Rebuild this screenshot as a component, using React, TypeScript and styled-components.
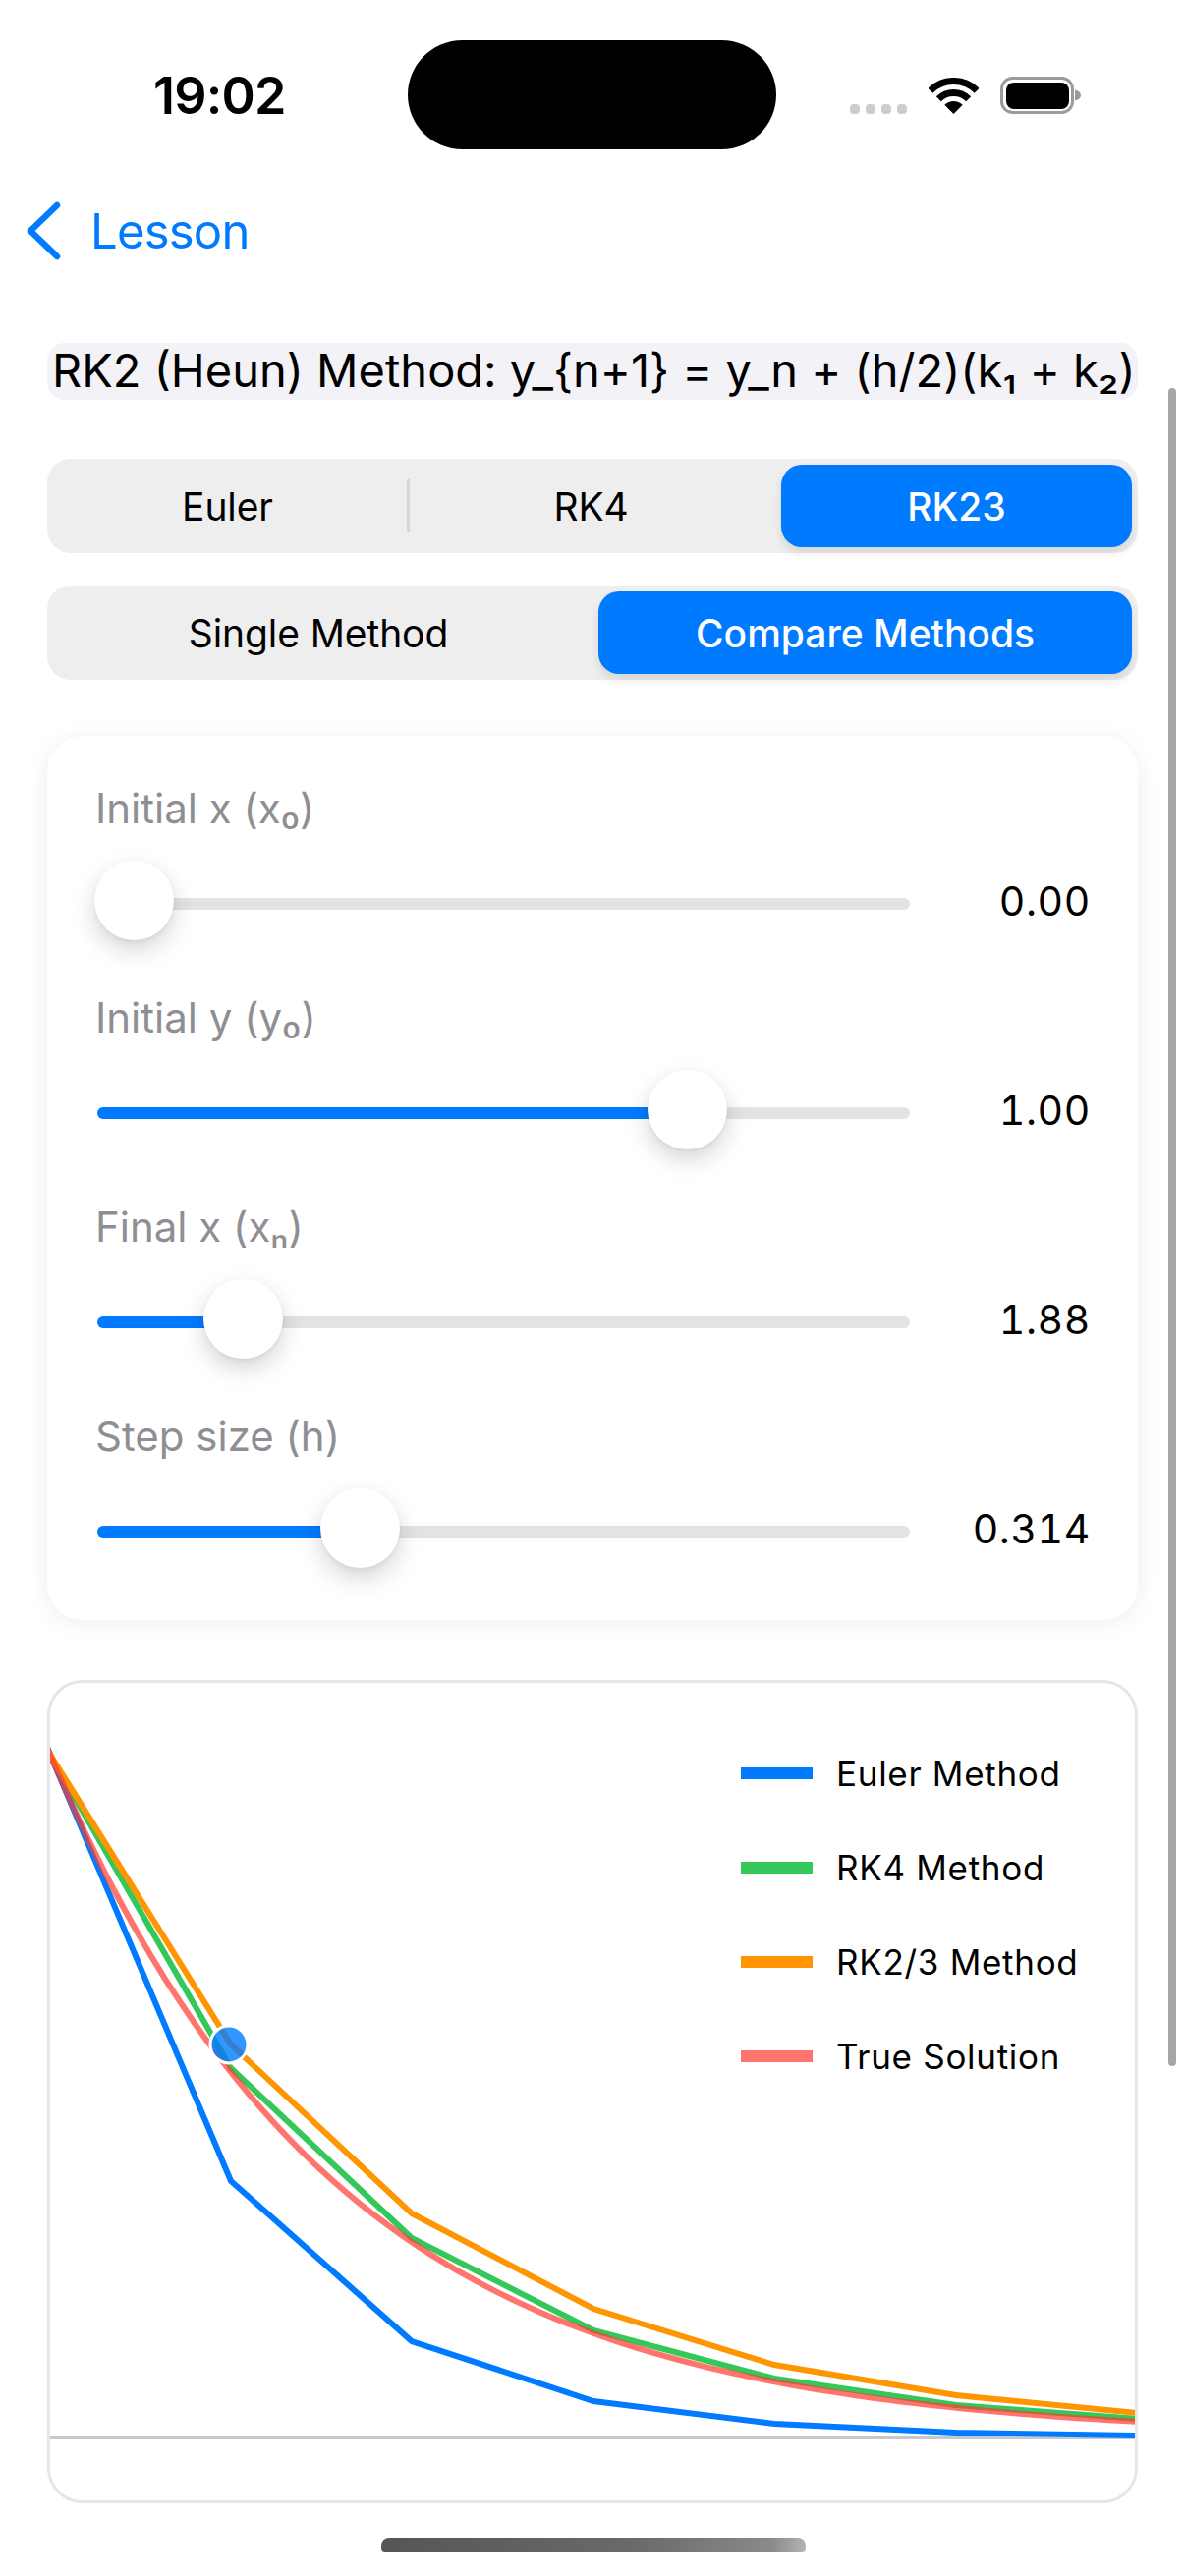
import React from "react";
import styled, { createGlobalStyle } from "styled-components";

const BLUE = "#007aff";
const FONT = `Inter, "Liberation Sans", sans-serif`;

const GlobalStyle = createGlobalStyle`
  html, body {
    margin: 0;
    padding: 0;
    background: #fff;
  }
  * {
    box-sizing: border-box;
  }
`;

const Page = styled.div`
  position: relative;
  width: 1206px;
  height: 2622px;
  overflow: hidden;
  background: #fff;
  font-family: ${FONT};
  color: #000;
`;

const StatusBar = styled.div`
  display: flex;
  align-items: center;
  padding: 41px 0 0 156px;
  height: 152px;
`;

const Time = styled.div`
  width: 259px;
  font-size: 52px;
  font-weight: 600;
  letter-spacing: -0.8px;
  line-height: 1;
  padding-top: 2px;
`;

const Island = styled.div`
  width: 375px;
  height: 111px;
  border-radius: 56px;
  background: #000;
`;

const StatusIcons = styled.div`
  display: flex;
  align-items: flex-end;
  height: 38px;
  margin-left: 75px;
`;

const SignalDots = styled.div`
  display: flex;
  gap: 6px;
  margin-right: 22px;
`;

const SignalDot = styled.span`
  width: 10px;
  height: 10px;
  border-radius: 4px;
  background: #cdcdcd;
`;

const Nav = styled.div`
  display: flex;
  align-items: center;
  gap: 27px;
  height: 197px;
  padding: 0 0 31px 25px;
  color: ${BLUE};
`;

const BackLabel = styled.span`
  font-size: 49px;
  line-height: 1;
  letter-spacing: -0.8px;
`;

const Content = styled.div`
  display: flex;
  flex-direction: column;
  padding: 0 48px;
`;

const Formula = styled.div`
  height: 58px;
  margin-bottom: 60px;
  padding: 0 5px;
  border-radius: 18px;
  background: #f2f2f7;
  font-size: 47px;
  line-height: 55px;
  white-space: nowrap;
`;

const Segment = styled.div<{ $gap?: number; $mb: number }>`
  display: flex;
  align-items: stretch;
  gap: ${(p) => p.$gap ?? 0}px;
  height: 96px;
  margin-bottom: ${(p) => p.$mb}px;
  padding: 6px;
  border-radius: 24px;
  background: #eeeeef;
`;

const SegmentItem = styled.div<{ $w: number; $active?: boolean; $shift?: number }>`
  display: flex;
  align-items: center;
  justify-content: center;
  width: ${(p) => p.$w}px;
  padding-right: ${(p) => p.$shift ?? 0}px;
  border-radius: 21px;
  font-size: 39px;
  font-weight: ${(p) => (p.$active ? 500 : 400)};
  letter-spacing: ${(p) => (p.$active ? 0 : -0.1)}px;
  color: ${(p) => (p.$active ? "#fff" : "#000")};
  background: ${(p) => (p.$active ? BLUE : "transparent")};
  box-shadow: ${(p) => (p.$active ? "0 6px 10px rgba(0,0,0,.1)" : "none")};
`;

const SegmentDivider = styled.span`
  align-self: center;
  width: 3px;
  height: 54px;
  margin: 0 1px 0 5px;
  background: #d6d6d8;
`;

const ControlsCard = styled.div`
  display: flex;
  flex-direction: column;
  gap: 56px;
  height: 900px;
  margin-bottom: 61px;
  padding: 51px 48px 0 48px;
  border-radius: 36px;
  background: #fff;
  box-shadow: 0 3px 24px rgba(0, 0, 0, 0.07);
`;

const Control = styled.div`
  display: flex;
  flex-direction: column;
  gap: 30px;
`;

const ControlLabel = styled.div`
  height: 46px;
  padding-left: 1px;
  font-size: 42px;
  line-height: 46px;
  color: #8e8e93;
  letter-spacing: 0;
`;

const SliderRow = styled.div`
  display: flex;
  align-items: center;
  height: 81px;
`;

const Track = styled.div`
  position: relative;
  width: 827px;
  height: 12px;
  margin: 7px 0 0 3px;
  border-radius: 6px;
  background: #e3e3e5;
`;

const TrackFill = styled.div`
  height: 100%;
  border-radius: 6px;
  background: ${BLUE};
`;

const Thumb = styled.div`
  position: absolute;
  top: -38px;
  width: 81px;
  height: 81px;
  margin-left: -40px;
  border-radius: 50%;
  background: #fff;
  box-shadow: 0 10px 24px rgba(0, 0, 0, 0.17), 0 2px 4px rgba(0, 0, 0, 0.05);
`;

const SliderValue = styled.div`
  flex: 1;
  text-align: right;
  font-size: 41px;
  font-variant-numeric: tabular-nums;
  letter-spacing: 0.6px;
`;

const ChartBox = styled.div`
  position: relative;
  height: 838px;
  border: 3px solid #e5e5ea;
  border-radius: 36px;
  overflow: hidden;
  background: #fff;
`;

const ChartSvg = styled.svg`
  display: block;
  width: 1104px;
  height: 832px;
`;

const Legend = styled.ul`
  position: absolute;
  top: 44px;
  left: 703px;
  margin: 0;
  padding: 0;
  list-style: none;
`;

const LegendRow = styled.li`
  display: flex;
  align-items: center;
  gap: 24px;
  height: 96px;
  font-size: 35px;
  letter-spacing: 0.7px;
`;

const LegendSwatch = styled.span<{ $color: string }>`
  width: 73px;
  height: 12px;
  background: ${(p) => p.$color};
`;

const ScrollBar = styled.div`
  position: absolute;
  top: 395px;
  left: 1189px;
  width: 8px;
  height: 1708px;
  border-radius: 4px;
  background: #a6a6a6;
`;

const HomeIndicator = styled.div`
  position: absolute;
  top: 2583px;
  left: 388px;
  width: 432px;
  height: 15px;
  border-radius: 8px 8px 4px 4px;
  background: linear-gradient(95deg, #555 0%, #6a6a6a 60%, #8a8a8a 92%, #b5b5b5 100%);
`;

const sliders = [
  { label: "Initial x (x₀)", value: "0.00", pos: 37 },
  { label: "Initial y (y₀)", value: "1.00", pos: 600 },
  { label: "Final x (xₙ)", value: "1.88", pos: 148 },
  { label: "Step size (h)", value: "0.314", pos: 267 },
];

const legend = [
  { label: "Euler Method", color: BLUE },
  { label: "RK4 Method", color: "#34c759" },
  { label: "RK2/3 Method", color: "#ff9500" },
  { label: "True Solution", color: "#ff756e" },
];

// plotted series start just left of the card so the border clips them
const xs = [41, 235, 419, 604, 788, 973, 1157];
const toLine = (ys: number[]) => xs.map((x, i) => `${x},${ys[i]}`).join(" ");

const eulerY = [1762, 2220, 2383, 2444, 2467, 2476, 2479];
const rk4Y = [1769, 2105, 2278, 2372, 2421, 2448, 2462];
const rk23Y = [1770, 2081, 2253, 2350, 2407, 2438, 2456];

// true solution, sampled finely so it reads as a curve
const truePoints = Array.from({ length: 80 }, (_, i) => {
  const x = 41 + (i * 1116) / 79;
  const y = 2481 - 695 * Math.pow(0.535, (x - 51) / 184);
  return `${x.toFixed(1)},${y.toFixed(1)}`;
}).join(" ");

const WifiIcon = () => (
  <svg width="51" height="37" viewBox="0 0 51 37" style={{ marginRight: 22 }}>
    <path d="M1.8 13.3A33.5 33.5 0 0 1 49.2 13.3" fill="none" stroke="#000" strokeWidth="7" />
    <path d="M10.3 21.8A21.5 21.5 0 0 1 40.7 21.8" fill="none" stroke="#000" strokeWidth="7" />
    <path d="M25.5 37L16.3 27.8A13 13 0 0 1 34.7 27.8Z" fill="#000" />
  </svg>
);

const BatteryIcon = () => (
  <svg width="82" height="38" viewBox="0 0 82 38">
    <rect x="1.5" y="1.5" width="72" height="35" rx="11" fill="none" stroke="#9b9b9b" strokeWidth="3" />
    <rect x="6" y="6" width="64" height="27" rx="8" fill="#000" />
    <path d="M76 13.5C79 14 82 16 82 19C82 22 79 24 76 24.5Z" fill="#9b9b9b" />
  </svg>
);

const BackChevron = () => (
  <svg width="40" height="62" viewBox="0 0 40 62">
    <path d="M33 5L6 31L33 57" fill="none" stroke={BLUE} strokeWidth="6.5" strokeLinecap="round" strokeLinejoin="round" />
  </svg>
);

export default function App() {
  return (
    <Page>
      <GlobalStyle />
      <StatusBar>
        <Time>19:02</Time>
        <Island />
        <StatusIcons>
          <SignalDots>
            {[0, 1, 2, 3].map((i) => (
              <SignalDot key={i} />
            ))}
          </SignalDots>
          <WifiIcon />
          <BatteryIcon />
        </StatusIcons>
      </StatusBar>

      <Nav>
        <BackChevron />
        <BackLabel>Lesson</BackLabel>
      </Nav>

      <Content>
        <Formula>RK2 (Heun) Method: y_{"{n+1}"} = y_n + (h/2)(k₁ + k₂)</Formula>

        <Segment $mb={33}>
          <SegmentItem $w={355}>Euler</SegmentItem>
          <SegmentDivider />
          <SegmentItem $w={377} $shift={10}>RK4</SegmentItem>
          <SegmentItem $w={357} $active>RK23</SegmentItem>
        </Segment>

        <Segment $mb={57} $gap={15}>
          <SegmentItem $w={540}>Single Method</SegmentItem>
          <SegmentItem $w={543} $active>Compare Methods</SegmentItem>
        </Segment>

        <ControlsCard>
          {sliders.map((s) => (
            <Control key={s.label}>
              <ControlLabel>{s.label}</ControlLabel>
              <SliderRow>
                <Track>
                  {s.pos > 40 && <TrackFill style={{ width: s.pos }} />}
                  <Thumb style={{ left: s.pos }} />
                </Track>
                <SliderValue>{s.value}</SliderValue>
              </SliderRow>
            </Control>
          ))}
        </ControlsCard>

        <ChartBox>
          <ChartSvg viewBox="51 1713 1104 832">
            <line x1="51" y1="2481.5" x2="1155" y2="2481.5" stroke="#c7c7cc" strokeWidth="3" />
            <polyline points={toLine(eulerY)} fill="none" stroke={BLUE} strokeWidth="6" />
            <polyline points={toLine(rk4Y)} fill="none" stroke="#34c759" strokeWidth="6" />
            <polyline points={toLine(rk23Y)} fill="none" stroke="#ff9500" strokeWidth="6" />
            <polyline points={truePoints} fill="none" stroke="#ff3b30" strokeOpacity="0.7" strokeWidth="6" />
            <circle cx="233" cy="2081" r="19" fill={BLUE} fillOpacity="0.8" stroke="#fff" strokeWidth="3" />
          </ChartSvg>
          <Legend>
            {legend.map((l) => (
              <LegendRow key={l.label}>
                <LegendSwatch $color={l.color} />
                {l.label}
              </LegendRow>
            ))}
          </Legend>
        </ChartBox>
      </Content>

      <ScrollBar />
      <HomeIndicator />
    </Page>
  );
}
